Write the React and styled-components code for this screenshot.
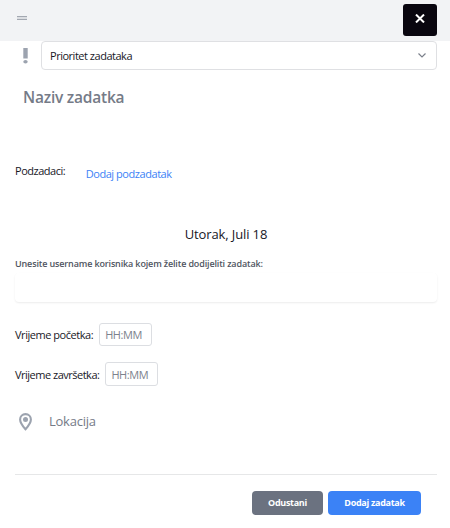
import React from "react";
import styled, { createGlobalStyle } from "styled-components";

const GlobalStyle = createGlobalStyle`
  *, *::before, *::after { box-sizing: border-box; }
  body {
    margin: 0;
    background: #fff;
    color: #17171f;
    font-family: "Open Sans", "Noto Sans", sans-serif;
    font-size: 11px;
  }
  button, input { font: inherit; letter-spacing: inherit; margin: 0; }
`;

const Dialog = styled.form`
  display: flex;
  flex-direction: column;
  width: 450px;
  height: 528px;
  overflow: hidden;
`;

const Header = styled.header`
  display: flex;
  flex: none;
  align-items: flex-start;
  justify-content: space-between;
  height: 41px;
  padding: 4px 13px 0 17px;
  background: #f2f3f5;
`;

const DragHandle = styled.span`
  width: 10px;
  height: 4px;
  margin-top: 12px;
  border: solid #a3a8b1;
  border-width: 1px 0;
  background: #dcdee2;
`;

const CloseButton = styled.button`
  display: flex;
  justify-content: center;
  width: 34px;
  height: 32px;
  padding: 10px 0 0;
  border: 0;
  border-radius: 3px;
  background: #09060f;
`;

const Body = styled.main`
  display: flex;
  flex-direction: column;
  flex: 1;
  padding: 0 13px 0 15px;
`;

const PriorityRow = styled.div`
  display: flex;
  height: 29px;
  padding-left: 8px;
  gap: 13px;

  > svg { flex: none; margin-top: 7px; }
`;

const Select = styled.div`
  display: flex;
  align-items: center;
  justify-content: space-between;
  flex: 1;
  padding: 0 10px 0 8px;
  border: 1px solid #dfe0e3;
  border-radius: 4px;
  letter-spacing: -0.48px;
`;

const TitleInput = styled.input`
  height: 26px;
  margin-top: 14px;
  padding: 0 8px;
  border: 0;
  background: none;
  font-size: 15.5px;
  font-weight: 600;
  letter-spacing: -0.22px;

  &::placeholder { color: #757b87; opacity: 1; }
`;

const Subtasks = styled.div`
  display: flex;
  height: 30px;
  margin-top: 53px;
  gap: 20.5px;
  line-height: 16px;
  letter-spacing: -0.48px;
`;

const AddSubtask = styled.button`
  align-self: flex-start;
  padding: 3px 0 0;
  border: 0;
  background: none;
  color: #3b82f6;
  line-height: 16px;
  letter-spacing: -0.45px;
`;

const DateText = styled.div`
  height: 20px;
  margin-top: 31px;
  text-align: center;
  font-size: 13px;
  line-height: 20px;
  letter-spacing: -0.12px;
`;

const UserLabel = styled.label`
  height: 14px;
  margin-top: 13px;
  color: #4f5561;
  font-size: 9px;
  font-weight: 600;
  line-height: 14px;
  letter-spacing: -0.14px;
`;

const UserInput = styled.input`
  height: 29px;
  margin-top: 2px;
  border: 0;
  border-radius: 4px;
  background: #fff;
  box-shadow: 0 1px 2px rgba(0, 0, 0, 0.08);
`;

const TimeFields = styled.div`
  display: flex;
  flex-direction: column;
  gap: 16px;
  margin-top: 21px;
`;

const TimeField = styled.label`
  display: flex;
  align-items: center;
  gap: 6px;
  height: ${(p) => p.$height}px;
  letter-spacing: ${(p) => p.$tracking}px;
`;

const TimeInput = styled.input`
  width: 53px;
  height: 100%;
  padding: 0 5px;
  border: 1px solid #dcdee2;
  border-radius: 3px;
  letter-spacing: -0.4px;

  &::placeholder { color: #7d828d; opacity: 1; }
`;

const LocationRow = styled.div`
  display: flex;
  align-items: center;
  height: 24px;
  margin-top: 24px;
  padding-left: 4px;
  gap: 17px;
`;

const LocationInput = styled.input`
  flex: 1;
  height: 24px;
  padding: 0 0 3px;
  border: 0;
  background: none;
  font-size: 13px;
  letter-spacing: -0.25px;

  &::placeholder { color: #757b87; opacity: 1; }
`;

const Footer = styled.footer`
  display: flex;
  justify-content: flex-end;
  gap: 5px;
  margin-top: 40px;
  padding: 16px 16px 0 0;
  border-top: 1px solid #e6e7e8;
`;

const ActionButton = styled.button`
  width: ${(p) => (p.$primary ? 93 : 71)}px;
  height: 24px;
  padding: 0 0 1px;
  border: 0;
  border-radius: 4px;
  background: ${(p) => (p.$primary ? "#3b82f6" : "#6b7280")};
  color: #fff;
  font-size: 9px;
  font-weight: 700;
  letter-spacing: -0.3px;
`;

const CloseIcon = () => (
  <svg width="10" height="9" viewBox="0 0 10 9" fill="none" stroke="#fff" strokeWidth="2.1">
    <path d="M1 .6 9 8.4M9 .6 1 8.4" />
  </svg>
);

const PriorityIcon = () => (
  <svg width="5" height="16" viewBox="0 0 5 16" fill="#9ca3af">
    <path d="M.3 0h4.4v10.5H.3z" />
    <ellipse cx="2.5" cy="13.8" rx="2.2" ry="1.8" />
  </svg>
);

const ChevronIcon = () => (
  <svg width="8" height="5" viewBox="0 0 8 5" fill="none" stroke="#7b808b" strokeWidth="1.2">
    <path d="M.5.5 4 4 7.5.5" />
  </svg>
);

const PinIcon = () => (
  <svg width="13" height="18" viewBox="0 0 13 18">
    <path
      d="M6.5 1.1C3.4 1.1 1.1 3.4 1.1 6.4c0 3.7 5.4 9.8 5.4 9.8s5.4-6.1 5.4-9.8c0-3-2.3-5.3-5.4-5.3Z"
      fill="none"
      stroke="#9ca3af"
      strokeWidth="2.1"
    />
    <circle cx="6.5" cy="6.4" r="2.5" fill="#9ca3af" />
  </svg>
);

export default function App() {
  return (
    <>
      <GlobalStyle />
      <Dialog>
        <Header>
          <DragHandle />
          <CloseButton type="button" aria-label="Zatvori">
            <CloseIcon />
          </CloseButton>
        </Header>
        <Body>
          <PriorityRow>
            <PriorityIcon />
            <Select>
              Prioritet zadataka
              <ChevronIcon />
            </Select>
          </PriorityRow>
          <TitleInput placeholder="Naziv zadatka" />
          <Subtasks>
            <span>Podzadaci:</span>
            <AddSubtask type="button">Dodaj podzadatak</AddSubtask>
          </Subtasks>
          <DateText>Utorak, Juli 18</DateText>
          <UserLabel htmlFor="username">
            Unesite username korisnika kojem želite dodijeliti zadatak:
          </UserLabel>
          <UserInput id="username" />
          <TimeFields>
            <TimeField $height={23} $tracking={-0.46}>
              Vrijeme početka:
              <TimeInput placeholder="HH:MM" />
            </TimeField>
            <TimeField $height={24} $tracking={-0.5}>
              Vrijeme završetka:
              <TimeInput placeholder="HH:MM" />
            </TimeField>
          </TimeFields>
          <LocationRow>
            <PinIcon />
            <LocationInput placeholder="Lokacija" />
          </LocationRow>
          <Footer>
            <ActionButton type="button">Odustani</ActionButton>
            <ActionButton type="button" $primary>
              Dodaj zadatak
            </ActionButton>
          </Footer>
        </Body>
      </Dialog>
    </>
  );
}
